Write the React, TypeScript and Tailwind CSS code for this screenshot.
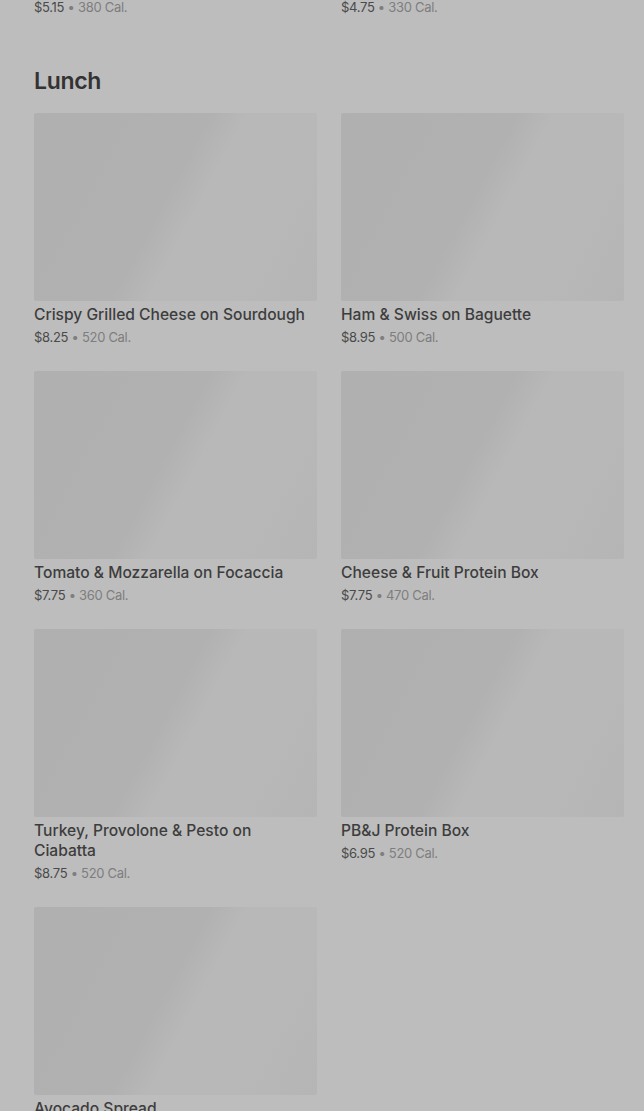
import React from "react";

type Item = { name: string; price: string; cal: string };

const lunch: Item[] = [
  { name: "Crispy Grilled Cheese on Sourdough", price: "$8.25", cal: "520 Cal." },
  { name: "Ham & Swiss on Baguette", price: "$8.95", cal: "500 Cal." },
  { name: "Tomato & Mozzarella on Focaccia", price: "$7.75", cal: "360 Cal." },
  { name: "Cheese & Fruit Protein Box", price: "$7.75", cal: "470 Cal." },
  { name: "Turkey, Provolone & Pesto on Ciabatta", price: "$8.75", cal: "520 Cal." },
  { name: "PB&J Protein Box", price: "$6.95", cal: "520 Cal." },
  { name: "Avocado Spread", price: "$2.25", cal: "110 Cal." },
];

function PriceLine({ price, cal }: { price: string; cal: string }) {
  return (
    <div className="text-[13px] leading-[20px] tracking-[-0.3px]">
      <span className="text-[#4a4a4a]">{price}</span>
      <span className="text-[#7e7e7e]"> • {cal}</span>
    </div>
  );
}

function Card({ item }: { item: Item }) {
  return (
    <div className="flex flex-col">
      <div className="h-[188px] w-full rounded-[2px] bg-[linear-gradient(118deg,#b0b0b0_0%,#b1b1b1_46%,#b8b8b8_56%,#b8b8b8_78%,#b5b5b5_100%)]" />
      <div className="mt-[4px] text-[15.6px] leading-[20px] font-medium text-[#3d3d3d]">
        {item.name}
      </div>
      <div className="mt-[2px]">
        <PriceLine price={item.price} cal={item.cal} />
      </div>
    </div>
  );
}

export default function App() {
  return (
    <div
      className="min-h-[1111px] w-[644px] overflow-hidden bg-[#bdbdbd] pl-[34px] pr-[20px]"
      style={{ fontFamily: "Inter, 'Noto Sans', sans-serif" }}
    >
      <div className="-mt-[3px] grid grid-cols-2 gap-x-[24px]">
        <PriceLine price="$5.15" cal="380 Cal." />
        <PriceLine price="$4.75" cal="330 Cal." />
      </div>
      <h2 className="mt-[48px] text-[23px] leading-[32px] font-semibold text-[#333333] tracking-[-0.3px]">
        Lunch
      </h2>
      <div className="mt-[16px] grid grid-cols-2 gap-x-[24px] gap-y-[24px]">
        {lunch.map((it) => (
          <Card key={it.name} item={it} />
        ))}
      </div>
    </div>
  );
}
